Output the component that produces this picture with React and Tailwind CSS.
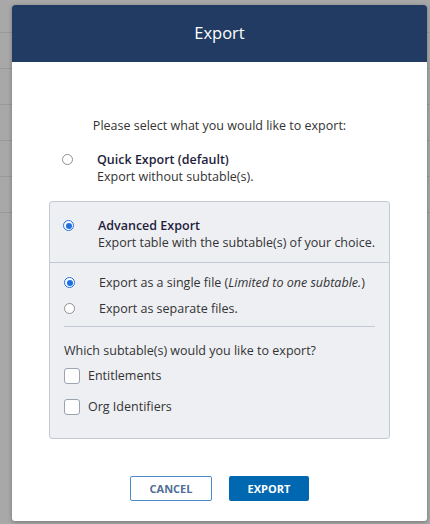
import React from 'react';

function Radio({ checked }) {
  return checked ? (
    <span className="flex h-[11px] w-[11px] shrink-0 items-center justify-center rounded-full border border-[#1f6fe0] bg-white">
      <span className="block h-[6px] w-[6px] rounded-full bg-[#1f6fe0]" />
    </span>
  ) : (
    <span className="block h-[11px] w-[11px] shrink-0 rounded-full border border-[#8f8f8f] bg-white" />
  );
}

function Checkbox() {
  return <span className="block h-[16px] w-[16px] shrink-0 rounded-[3px] border border-[#9aa3ae] bg-white" />;
}

export default function App() {
  return (
    <div
      className="relative h-[524px] w-[430px] overflow-hidden bg-[#a8a8a8]"
      style={{ fontFamily: '"Open Sans", "Liberation Sans", sans-serif' }}
    >
      {/* table rows behind the overlay */}
      <div className="flex flex-col pt-[32px]">
        {[0, 1, 2, 3, 4, 5].map(i => (
          <div key={i} className="h-[36px] border-t border-[#999999]" />
        ))}
      </div>

      {/* modal */}
      <div className="absolute left-[12px] top-[5px] flex h-[516px] w-[415px] flex-col overflow-hidden rounded-[3px] bg-white shadow-[0_1px_4px_rgba(0,0,0,0.3)]">
        <div className="flex h-[57px] items-center justify-center bg-[#213b63] text-[16.5px] text-white">
          Export
        </div>

        <div className="flex flex-1 flex-col px-[37px] text-[12.5px] leading-[17px] text-[#333333]">
          <p className="mt-[55px] text-center">Please select what you would like to export:</p>

          <div className="mt-[17px] flex items-start pl-[13px]">
            <div className="pt-[3px]"><Radio /></div>
            <div className="ml-[24px]">
              <div className="font-semibold text-[#1e1e3c]">Quick Export (default)</div>
              <div>Export without subtable(s).</div>
            </div>
          </div>

          <div className="mt-[16px] rounded-[3px] border border-[#c3cad5] bg-[#eeeff3]">
            <div className="flex h-[61px] items-start border-b border-[#c3cad5] pl-[13px] pt-[15px]">
              <div className="pt-[3px]"><Radio checked /></div>
              <div className="ml-[24px]">
                <div className="font-semibold text-[#1e1e3c]">Advanced Export</div>
                <div>Export table with the subtable(s) of your choice.</div>
              </div>
            </div>

            <div className="px-[14px] pb-[23px] pt-[11px]">
              <div className="flex items-center">
                <Radio checked />
                <span className="ml-[24px]">
                  Export as a single file (<i>Limited to one subtable.</i>)
                </span>
              </div>
              <div className="mt-[9px] flex items-center">
                <Radio />
                <span className="ml-[24px]">Export as separate files.</span>
              </div>
              <div className="mt-[9px] border-t border-[#c3cad5]" />
              <div className="mt-[15px]">Which subtable(s) would you like to export?</div>
              <div className="mt-[8px] flex items-center gap-[8px]">
                <Checkbox />
                <span>Entitlements</span>
              </div>
              <div className="mt-[14px] flex items-center gap-[8px]">
                <Checkbox />
                <span>Org Identifiers</span>
              </div>
            </div>
          </div>

          <div className="mt-[37px] flex justify-center gap-[17px]">
            <button className="h-[25px] w-[82px] rounded-[2px] border border-[#4a8ccf] bg-white text-[11px] font-bold text-[#4f6f95]">
              CANCEL
            </button>
            <button className="h-[25px] w-[80px] rounded-[2px] bg-[#0067b1] text-[11px] font-bold text-white">
              EXPORT
            </button>
          </div>
        </div>
      </div>
    </div>
  );
}
